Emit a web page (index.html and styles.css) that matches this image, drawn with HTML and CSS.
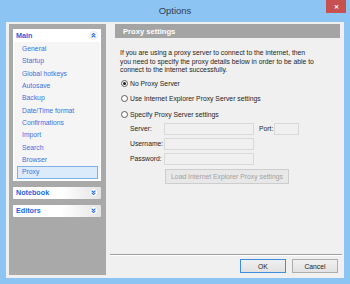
FILE: index.html
```html
<!doctype html>
<html lang="en">
<head>
    <meta charset="utf-8"/>
    <title>Options</title>
    <link rel="stylesheet" href="styles.css">
</head>
<body>
    <div class="window">
        <div class="titlebar">
            <span class="title">Options</span>
            <span class="close">&#x2715;</span>
        </div>
        <div class="client">
            <div class="sidebar">
                <div class="group">
                    <div class="group-head open">
                        <span>Main</span>
                        <svg class="chev" width="9" height="9" viewBox="0 0 9 9">
                            <circle cx="4.5" cy="4.5" r="4" fill="#fff" stroke="#e2e2e2" stroke-width="0.8"/>
                            <path d="M2.6 4.2 L4.5 2.4 L6.4 4.2 M2.6 6.4 L4.5 4.6 L6.4 6.4" fill="none" stroke="#2d6fe0" stroke-width="1.1"/>
                        </svg>
                    </div>
                    <ul class="items">
                        <li>General</li>
                        <li>Startup</li>
                        <li>Global hotkeys</li>
                        <li>Autosave</li>
                        <li>Backup</li>
                        <li>Date/Time format</li>
                        <li>Confirmations</li>
                        <li>Import</li>
                        <li>Search</li>
                        <li>Browser</li>
                        <li class="current">Proxy</li>
                    </ul>
                </div>
                <div class="group-head closed">
                    <span>Notebook</span>
                    <svg class="chev" width="9" height="9" viewBox="0 0 9 9">
                        <circle cx="4.5" cy="4.5" r="4" fill="#fff" stroke="#e2e2e2" stroke-width="0.8"/>
                        <path d="M2.6 2.6 L4.5 4.4 L6.4 2.6 M2.6 4.8 L4.5 6.6 L6.4 4.8" fill="none" stroke="#2d6fe0" stroke-width="1.1"/>
                    </svg>
                </div>
                <div class="group-head closed">
                    <span>Editors</span>
                    <svg class="chev" width="9" height="9" viewBox="0 0 9 9">
                        <circle cx="4.5" cy="4.5" r="4" fill="#fff" stroke="#e2e2e2" stroke-width="0.8"/>
                        <path d="M2.6 2.6 L4.5 4.4 L6.4 2.6 M2.6 4.8 L4.5 6.6 L6.4 4.8" fill="none" stroke="#2d6fe0" stroke-width="1.1"/>
                    </svg>
                </div>
            </div>
            <div class="content">
                <div class="pane">
                    <div class="pane-head">Proxy settings</div>
                    <p class="intro">If you are using a proxy server to connect to the internet, then you need to specify the proxy details below in order to be able to connect to the internet successfully.</p>
                    <label class="radio"><span class="dot checked"></span>No Proxy Server</label>
                    <label class="radio"><span class="dot"></span>Use Internet Explorer Proxy Server settings</label>
                    <label class="radio"><span class="dot"></span>Specify Proxy Server settings</label>
                    <div class="form">
                        <div class="row">
                            <span class="lbl">Server:</span>
                            <span class="field"></span>
                            <span class="lbl port">Port:</span>
                            <span class="field small"></span>
                        </div>
                        <div class="row">
                            <span class="lbl">Username:</span>
                            <span class="field"></span>
                        </div>
                        <div class="row">
                            <span class="lbl">Password:</span>
                            <span class="field"></span>
                        </div>
                        <div class="load">Load Internet Explorer Proxy settings</div>
                    </div>
                </div>
                <div class="footer">
                    <div class="sep"></div>
                    <div class="buttons">
                        <span class="btn default">OK</span>
                        <span class="btn">Cancel</span>
                    </div>
                </div>
            </div>
        </div>
    </div>
</body>
</html>
```

FILE: styles.css
```css
* {
    padding: 0;
    margin: 0;
    list-style: none;
    box-sizing: border-box;
}

body {
    font-family: "Liberation Sans", Arial, sans-serif;
    font-size: 6.8px;
    color: #1e1e1e;
}

.window {
    width: 350px;
    height: 284px;
    background: #8cc4f3;
    display: flex;
    flex-direction: column;
}

.titlebar {
    height: 22px;
    position: relative;
    display: flex;
    justify-content: center;
    align-items: center;
    padding-bottom: 2px;
}

.title {
    font-size: 9.5px;
    color: #2e4157;
}

.close {
    position: absolute;
    right: 4px;
    top: 0;
    width: 20px;
    height: 13px;
    background: #c75150;
    color: #fff;
    font-size: 6px;
    font-weight: bold;
    display: flex;
    justify-content: center;
    align-items: center;
}

.client {
    flex: 1;
    margin: 0 6px 6px 6px;
    background: #f0f0f0;
    display: flex;
}

/* left navigation */
.sidebar {
    width: 97px;
    margin: 2px 0 3px 3px;
    background: #a9a9a9;
    padding: 5px 5px 0 4px;
    display: flex;
    flex-direction: column;
    gap: 6px;
}

.group {
    background: #fff;
    padding: 0 1px 2px 1px;
}

.group-head {
    height: 12px;
    display: flex;
    align-items: center;
    justify-content: space-between;
    padding: 0 3px 0 3px;
    font-weight: bold;
    font-size: 7.2px;
    color: #1f63dc;
}

.group-head.closed {
    background: linear-gradient(to right, #ffffff 55%, #e4e4e4);
    border-radius: 1px;
}

.group-head.open {
    margin: 0 -1px;
    height: 13px;
}

.items {
    background: #f5f5f5;
    padding-top: 1px;
}

.items li {
    height: 12.35px;
    line-height: 12.35px;
    padding-left: 8px;
    color: #3c73dc;
}

.items li.current {
    margin: 0 2px 0 3px;
    padding-left: 4px;
    background: #dcebfb;
    border: 1px solid #7fb0e6;
    line-height: 10.35px;
}

/* right side */
.content {
    flex: 1;
    display: flex;
    flex-direction: column;
}

.pane {
    flex: 1;
    padding: 2px 4px 0 9px;
}

.pane-head {
    height: 14px;
    background: #a4a4a4;
    color: #fff;
    font-weight: bold;
    font-size: 7.6px;
    padding-left: 8px;
    display: flex;
    align-items: center;
}

.intro {
    margin: 11px 0 0 5px;
    line-height: 8.5px;
    width: 196px;
}

.radio {
    display: flex;
    align-items: center;
    height: 15.5px;
    margin-left: 6px;
}

.radio:first-of-type {
    margin-top: 1px;
}

.dot {
    width: 7px;
    height: 7px;
    border-radius: 50%;
    border: 1px solid #5c5c5c;
    background: #fff;
    margin-right: 2px;
    display: flex;
    justify-content: center;
    align-items: center;
}

.dot.checked::after {
    content: "";
    width: 3px;
    height: 3px;
    border-radius: 50%;
    background: #1a1a1a;
}

.form {
    padding-left: 15px;
    margin-top: 0.5px;
}

.row {
    display: flex;
    align-items: center;
    height: 12.5px;
    margin-bottom: 2.5px;
}

.lbl {
    width: 34px;
}

.lbl.port {
    width: 20px;
    padding-left: 5px;
}

.field {
    width: 90px;
    height: 12.5px;
    background: #f0f0f0;
    border: 1px solid #d9d9d9;
}

.field.small {
    width: 25px;
}

.load {
    margin: 3.5px 0 0 35px;
    width: 124px;
    height: 15px;
    background: #e8e8e8;
    border: 1px solid #cdcdcd;
    color: #a2a2a2;
    display: flex;
    justify-content: center;
    align-items: center;
}

.footer {
    padding: 0 2px 5px 4px;
}

.sep {
    border-top: 1px solid #a0a0a0;
    border-bottom: 1px solid #fff;
}

.buttons {
    display: flex;
    justify-content: flex-end;
    gap: 6px;
    margin-top: 3px;
    padding-right: 4px;
}

.btn {
    width: 46px;
    height: 14px;
    background: linear-gradient(#f0f0f0, #e2e2e2);
    border: 1px solid #adadad;
    display: flex;
    justify-content: center;
    align-items: center;
}

.btn.default {
    border-color: #3d8ee0;
}
```
